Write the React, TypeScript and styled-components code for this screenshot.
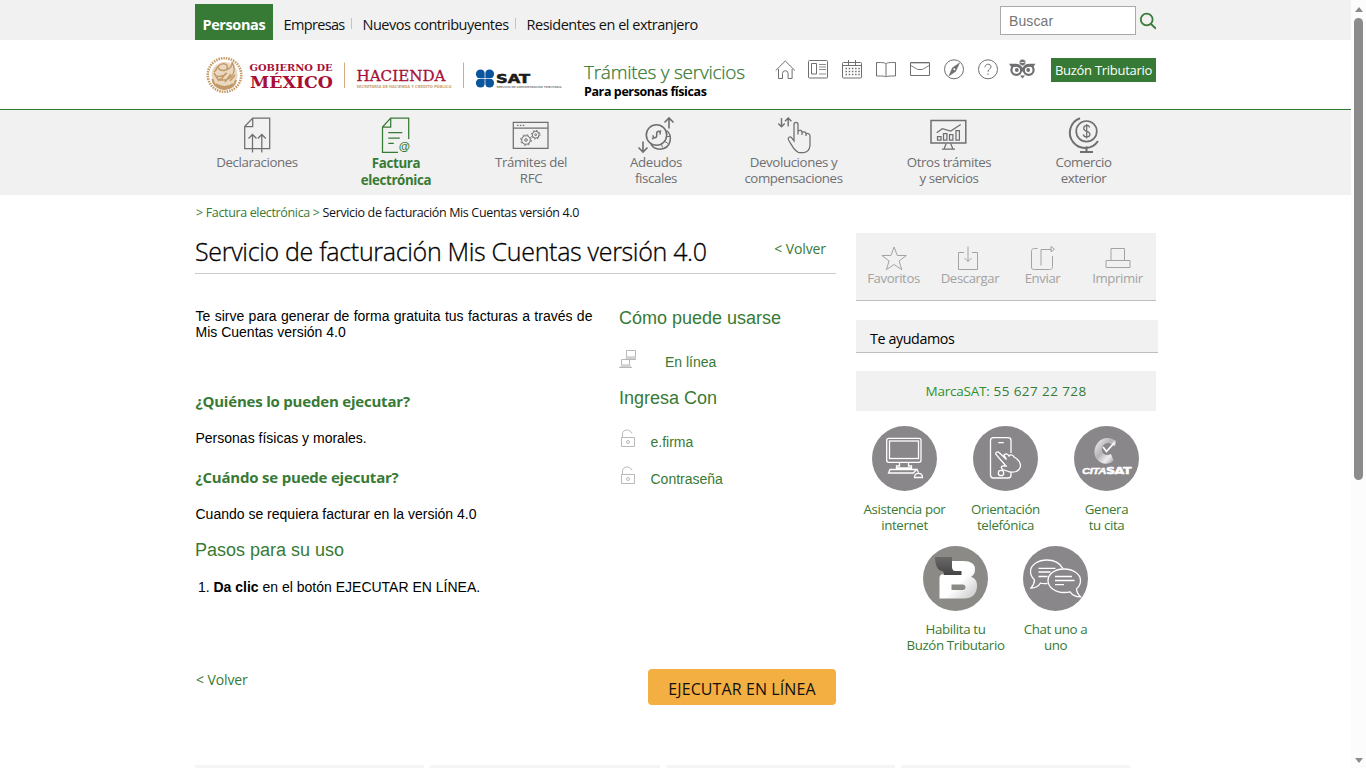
import React from 'react';
import styled, { createGlobalStyle } from 'styled-components';

const GREEN = '#377a35';
const GREY = '#6f6f72';
const PANEL = '#f1f1f1';
const HUMANIST = '"Open Sans", "Noto Sans", sans-serif';
const ARIAL = '"Liberation Sans", Arial, sans-serif';

const Global = createGlobalStyle`
  * { box-sizing: border-box; }
  body { margin: 0; background: #fff; color: #000; font-family: ${HUMANIST}; overflow: hidden; }
  svg { display: block; flex: none; }
  a { color: inherit; text-decoration: none; }
`;

/* ---------- page frame ---------- */
const Window = styled.div`
  display: flex;
  height: 768px;
  overflow: hidden;
`;
const Page = styled.div`
  flex: 1;
  min-width: 0;
  display: flex;
  flex-direction: column;
  > * { flex-shrink: 0; }
`;
const Inner = styled.div`
  width: 961px;
  margin-left: 195px;
  display: flex;
`;
const Body = styled(Inner)`
  width: 963px;
`;
const Scrollbar = styled.div`
  width: 15px;
  display: flex;
  flex-direction: column;
  align-items: center;
  justify-content: space-between;
  background: #fcfcfc;
  padding: 7px 0 5px;
`;
const Thumb = styled.div`
  width: 9px;
  height: 462px;
  border-radius: 5px;
  background: #8b8b8b;
  margin: 6px 0 auto;
`;
const Arrow = styled.div<{ $down?: boolean }>`
  border: 4.5px solid transparent;
  border-top: ${p => (p.$down ? '5px solid #8b8b8b' : '0')};
  border-bottom: ${p => (p.$down ? '0' : '5px solid #8b8b8b')};
`;

/* ---------- top bar ---------- */
const TopBar = styled.div`
  height: 40px;
  background: ${PANEL};
`;
const Tabs = styled.nav`
  display: flex;
  flex: 1;
  padding-top: 4px;
`;
const Tab = styled.a<{ $active?: boolean; $w: number; $ls: number }>`
  width: ${p => p.$w}px;
  height: 36px;
  padding-top: 3px;
  padding-left: ${p => (p.$active ? 7.5 : 10.5)}px;
  line-height: 36px;
  white-space: nowrap;
  font-size: 14.5px;
  letter-spacing: ${p => p.$ls}px;
  font-weight: ${p => (p.$active ? 700 : 400)};
  color: ${p => (p.$active ? '#fff' : '#111')};
  background: ${p => (p.$active ? GREEN : 'transparent')};
`;
const TabRule = styled.span`
  width: 1px;
  height: 11px;
  margin-top: 14px;
  background: #c4c4c4;
`;
const Search = styled.div`
  display: flex;
  padding: 6px 0 0;
  gap: 3px;
`;
const SearchBox = styled.div`
  width: 136px;
  height: 29px;
  border: 1px solid #a9a9a9;
  background: #fff;
  padding-left: 8px;
  font: 14px/28px ${ARIAL};
  letter-spacing: 0.1px;
  color: #757575;
`;

/* ---------- header ---------- */
const Header = styled.header`
  height: 70px;
  border-bottom: 1px solid ${GREEN};
`;
const Brand = styled.div`
  width: 389px;
  padding: 10px 0 0 5px;
`;
const Heading = styled.div`
  width: 184px;
  padding-top: 20px;
  white-space: nowrap;
`;
const Portal = styled.div`
  color: ${GREEN};
  font-size: 19px;
  line-height: 24px;
  letter-spacing: -0.25px;
  font-weight: 300;
  -webkit-text-stroke: 0.25px ${GREEN};
`;
const Audience = styled.div`
  font-size: 12.5px;
  line-height: 15px;
  font-weight: 700;
  letter-spacing: -0.4px;
`;
const HeaderTools = styled.div`
  display: flex;
  width: 283px;
  padding-top: 12px;
`;
const Mailbox = styled.a`
  width: 105px;
  height: 24px;
  margin-top: 18px;
  background: ${GREEN};
  color: #fff;
  text-align: center;
  font-size: 13px;
  line-height: 25px;
  letter-spacing: -0.28px;
  white-space: nowrap;
`;

/* ---------- section navigation ---------- */
const NavBar = styled.nav`
  height: 85px;
  background: ${PANEL};
`;
const NavItem = styled.a<{ $w: number; $active?: boolean }>`
  width: ${p => p.$w}px;
  flex: none;
  display: flex;
  flex-direction: column;
  align-items: center;
  padding-top: 4px;
  text-align: center;
  white-space: pre;
  font-size: 13.3px;
  line-height: ${p => (p.$active ? 17 : 16)}px;
  letter-spacing: ${p => (p.$active ? -0.35 : -0.4)}px;
  font-weight: ${p => (p.$active ? 700 : 400)};
  color: ${p => (p.$active ? GREEN : GREY)};
  svg { margin-bottom: ${p => (p.$active ? 1 : 0)}px; }
`;

/* ---------- content ---------- */
const Crumbs = styled.div`
  height: 38px;
  padding: 9px 0 0 1px;
  font-size: 12.5px;
  line-height: 17px;
  letter-spacing: -0.35px;
  color: ${GREEN};
  white-space: pre;
  b { font-weight: 400; color: #111; }
`;
const Main = styled.main`
  width: 641px;
  flex: none;
  margin-right: 20px;
`;
const TitleRow = styled.div`
  height: 41px;
  display: flex;
  justify-content: space-between;
  border-bottom: 1px solid #cbcbcb;
  white-space: nowrap;
`;
const Title = styled.h1`
  margin: 0;
  font-size: 25px;
  line-height: 37px;
  font-weight: 300;
  letter-spacing: -0.32px;
  -webkit-text-stroke: 0.3px #000;
`;
const Back = styled.a<{ $tall?: boolean }>`
  padding: 0 10px 0 1px;
  font-size: 14px;
  line-height: ${p => (p.$tall ? 32 : 22)}px;
  letter-spacing: -0.1px;
  color: ${GREEN};
`;
const Columns = styled.div`
  display: flex;
  height: 395px;
  padding-top: 34px;
`;
const Info = styled.section`
  width: 424px;
`;
const Usage = styled.section``;
const Copy = styled.p<{ $top?: number }>`
  margin: ${p => p.$top ?? 0}px 0 0 0.5px;
  min-height: 20px;
  font: 14px/16px ${ARIAL};
  padding: ${p => (p.$top ? '2px 0' : '0')};
  white-space: pre;
`;
const Lead = styled.span`
  word-spacing: 0.5px;
`;
const Steps = styled.ol`
  margin: 17px 0 0;
  padding-left: 18.5px;
  font: 14px/20px ${ARIAL};
`;
const Question = styled.h2<{ $top: number }>`
  margin: ${p => p.$top}px 0 0 0.5px;
  font-size: 15px;
  line-height: 20px;
  letter-spacing: -0.2px;
  color: ${GREEN};
`;
const Subhead = styled.h3<{ $top?: number }>`
  margin: ${p => p.$top ?? 0}px 0 0;
  font: 18px/20px ${ARIAL};
  color: ${GREEN};
`;
const Method = styled.div<{ $top: number; $gap: number }>`
  height: 20px;
  margin-top: ${p => p.$top}px;
  display: flex;
  gap: ${p => p.$gap}px;
  font: 14px/20px ${ARIAL};
  color: ${GREEN};
  svg { margin-top: -4px; }
`;
const Actions = styled.div`
  display: flex;
  justify-content: space-between;
`;
const Execute = styled.button`
  width: 188px;
  height: 36px;
  border: 0;
  border-radius: 4px;
  background: #f4af43;
  padding: 4px 0 0;
  font: 16px/32px ${HUMANIST};
  letter-spacing: 0.1px;
  color: #111;
`;

/* ---------- sidebar ---------- */
const Side = styled.aside`
  width: 302px;
  flex: none;
`;
const Toolbox = styled.div`
  width: 300px;
  height: 68px;
  display: flex;
  background: ${PANEL};
  border-bottom: 1px solid #bdbdbd;
`;
const Tool = styled.a<{ $w: number }>`
  width: ${p => p.$w}px;
  flex: none;
  display: flex;
  flex-direction: column;
  align-items: center;
  padding-top: 10px;
  font-size: 13.2px;
  line-height: 15px;
  letter-spacing: -0.4px;
  color: #a3a3a3;
`;
const HelpHead = styled.div`
  height: 33px;
  margin-top: 19px;
  padding: 3px 0 0 14px;
  background: ${PANEL};
  border-bottom: 1px solid #bdbdbd;
  font-size: 14.3px;
  line-height: 32px;
  letter-spacing: -0.4px;
`;
const Phone = styled.div`
  width: 300px;
  height: 40px;
  margin: 18px 0 15px;
  background: ${PANEL};
  text-align: center;
  font-size: 13.5px;
  line-height: 40px;
  letter-spacing: 0.4px;
  color: ${GREEN};
  span { color: #2f9130; letter-spacing: -0.2px; }
`;
const HelpRow = styled.div<{ $left: number }>`
  display: flex;
  height: 120px;
  margin: 0 -10px 0 ${p => p.$left}px;
`;
const HelpItem = styled.a<{ $w?: number }>`
  width: ${p => p.$w ?? 101}px;
  flex: none;
  display: flex;
  flex-direction: column;
  align-items: center;
  text-align: center;
  white-space: pre;
  font-size: 13.3px;
  line-height: 16px;
  letter-spacing: -0.36px;
  color: ${GREEN};
  svg { margin-bottom: 10px; }
`;
const Cards = styled.div`
  display: flex;
  gap: 6px;
  margin: 60px 0 0 195px;
`;
const Card = styled.div`
  width: 229.3px;
  height: 20px;
  background: #f5f5f5;
`;

type Box = { x: number; y: number; w: number; h: number; color?: string; sw?: number; children: React.ReactNode };
const Icon = ({ x, y, w, h, color = GREY, sw = 1, children }: Box) => (
  <svg width={w} height={h} viewBox={`${x} ${y} ${w} ${h}`} fill="none" stroke={color} strokeWidth={sw}>
    {children}
  </svg>
);

const Logo = () => (
  <svg width="370" height="50" viewBox="200 50 370 50">
    <g fill="none" stroke="#c39a67">
      <circle cx="224.500" cy="75" r="16.800" strokeWidth="2.600" strokeDasharray="1.500 1" />
      <circle cx="224.500" cy="75" r="13" fill="#ead9c2" stroke="none" />
      <path d="M212.500 79c1 7 7 10.500 12.500 10 6-.5 10-4 11-9M216 84c5 4 12 4 17 0" strokeWidth="2" />
      <path d="M215 71c2-5 6-8 10-7 3 1 3 4 1 6 4-1 7-5 6-8 3 5 3 11-1 15-3 3-8 4-12 2M216 76c4 1 8 0 11-3M218 67c1 3 4 4 8 3M214 73l5 8M220 81l6-8M225 82l6-8M230 81l5-6M217 69l-3 3" strokeWidth="1.500" />
    </g>
    <g fill="#a70f35" fontFamily='"DejaVu Serif", serif' fontWeight="700">
      <text x="249.500" y="70.500" fontSize="9.800" textLength="83" lengthAdjust="spacingAndGlyphs">GOBIERNO DE</text>
      <text x="250" y="87.500" fontSize="16.500" textLength="83" lengthAdjust="spacingAndGlyphs">MÉXICO</text>
      <text x="356.500" y="81" fontSize="15" fontWeight="400" stroke="#a70f35" strokeWidth=".3" textLength="89" lengthAdjust="spacingAndGlyphs">HACIENDA</text>
    </g>
    <text x="356.500" y="88" fontSize="4" fontFamily='"DejaVu Sans", sans-serif' fontWeight="700" fill="#c9a273" textLength="95" lengthAdjust="spacingAndGlyphs">SECRETARÍA DE HACIENDA Y CRÉDITO PÚBLICO</text>
    <path d="M344.500 62.500V88M463.500 62.500V88" stroke="#d0ae80" />
    <g fill="#0b559f">
      <circle cx="480.500" cy="74" r="4.600" /><circle cx="489.500" cy="74" r="4.600" />
      <circle cx="480.500" cy="83" r="4.600" /><circle cx="489.500" cy="83" r="4.600" />
      <path d="M480 73h10v11h-10z" />
    </g>
    <path d="M485 69.500v18M476 78.500h18" stroke="#fff" strokeWidth=".7" />
    <text x="496" y="83" fontSize="11.500" fontFamily='"DejaVu Sans", sans-serif' fontWeight="700" fill="#1c1c1c" stroke="#1c1c1c" strokeWidth=".5" textLength="34" lengthAdjust="spacingAndGlyphs">SAT</text>
    <text x="496.500" y="87.500" fontSize="2.800" fontFamily='"DejaVu Sans", sans-serif' fill="#333" textLength="65" lengthAdjust="spacingAndGlyphs">SERVICIO DE ADMINISTRACIÓN TRIBUTARIA</text>
  </svg>
);

const headerIcons: React.ReactNode[] = [
  <path d="M775.700 70.500l9.600-9.500 9.600 9.500M778.500 69v9.500h4v-5a2.800 2.800 0 0 1 5.600 0v5h4V69" />,
  <><rect x="808.500" y="60.500" width="19" height="17.500" rx="1" /><path d="M811.500 63.500h5v10.500h-5z" /><path d="M819 64.500h7M819 67h7M819 69.500h7M819 74h7" strokeWidth=".8" /></>,
  <><rect x="842.500" y="62.500" width="19" height="15.500" rx="1" /><path d="M848.500 60v5M855.500 60v5M842.500 65.500h19" /><path d="M845.500 68.500h15M845.500 71.500h15M845.500 74.500h15" strokeDasharray="1.500 1.700" strokeWidth="1.400" /></>,
  <path d="M886 64v12.500M886 64c-1-1.500-3-1.500-9.500-1.500v13.500c6 0 8.500 0 9.500 1 1-1 3.500-1 9.500-1V62.500c-6.500 0-8.500 0-9.500 1.500z" />,
  <><path d="M910.500 62.500h19v13h-19z" /><path d="M911 63.500h18" opacity=".35" /><path d="M911 65.500l6.500 4h5l6.500-4" strokeWidth=".9" /></>,
  <><circle cx="954" cy="69.300" r="9.500" /><path d="M959.500 63l-4 8.500-6.500 4.300 3.500-8z" fill={GREY} strokeWidth=".6" /><circle cx="954.300" cy="69.300" r="1" fill="#fff" stroke="none" /></>,
  <><circle cx="988" cy="69.300" r="9.500" /><path d="M985 67.300c0-4 6-4 6-.5 0 2.500-3 2-3 5M988 73.500v1.500" /></>,
  <g><circle cx="1016.300" cy="70" r="4.900" strokeWidth="2.200" /><circle cx="1028.700" cy="70" r="4.900" strokeWidth="2.200" /><circle cx="1016.800" cy="70" r="1.900" fill={GREY} stroke="none" /><circle cx="1028.200" cy="70" r="1.900" fill={GREY} stroke="none" /><path d="M1009 63.700h7c3 .3 5 2 6.500 4 1.500-2 3.500-3.700 6.500-4h6.500l-2 3h-5c-3 .5-4.500 3-6 5-1.500-2-3-4.500-6-5h-5.500zM1020 75.500h5l-2.500 3z" fill={GREY} stroke="none" /><circle cx="1022.500" cy="62.500" r="3.200" fill={GREY} stroke="#fff" strokeWidth=".5" /><path d="M1020.500 62.500h4" stroke="#fff" strokeWidth=".8" /></g>,
];

const navItems: { w: number; x: number; label: string; active?: boolean; art: React.ReactNode }[] = [
  { w: 124, x: 257, label: 'Declaraciones', art: <path d="M244.700 126.500l8-8.500h17v30.500h-25zM252.700 118v8.500h-8M252.500 152.500V135M248.500 138.500l4-4 4 4M261.800 152.500V135M257.800 138.500l4-4 4 4" /> },
  { w: 154, x: 396, label: 'Factura\nelectrónica', active: true, art: <><path d="M398 152.300h-15.500V127l8.200-9h18v21M390.700 118v9h-8.200M388.300 132.500h14M388.300 138h11.500M388.300 143.300h5.500" /><text x="398.800" y="149.500" fontSize="11.500" fontFamily="Liberation Sans" fill={GREEN} stroke="none">@</text></> },
  { w: 116, x: 531, label: 'Trámites del\nRFC', art: <><path d="M513.300 122.300h34.700v26h-34.700zM513.300 128.200H548" /><path d="M517 125.300h7.500" strokeDasharray="1.500 1.400" /><g strokeWidth="1"><circle cx="526" cy="140" r="4.300" /><circle cx="526" cy="140" r="1.300" /><circle cx="526" cy="140" r="5.300" strokeDasharray="2 2.160" /><circle cx="535.700" cy="134.700" r="3.400" /><circle cx="535.700" cy="134.700" r=".9" /><circle cx="535.700" cy="134.700" r="4.300" strokeDasharray="1.600 1.780" /></g></> },
  { w: 134, x: 656, label: 'Adeudos\nfiscales', art: <><circle cx="656.500" cy="135" r="10.200" strokeWidth="1.600" /><path d="M666.500 130.500c6.500 5 5 18-6.500 18.700-4 0-7.500-2-9-5" strokeWidth="1.500" /><path d="M665 141.500l3 2M661.500 144.500l1 3M667 136.500h3" strokeWidth="1" /><path d="M660 134.500c.8-2-.5-3.700-2.300-3.100-2.300 1-.2 3.600-1.200 5.300-1.200 2-4 1-3.300-1.500M661 130.500l-1.500 1.500M653.800 137.500l-1.600 1.600" strokeWidth="1.600" /><path d="M669 128.500V118M664.500 122.500l4.500-4.500 4.500 4.500M643 141.500V152M638.500 147.500l4.500 4.500 4.500-4.500" strokeWidth="1.600" /></> },
  { w: 141, x: 793.5, label: 'Devoluciones y\ncompensaciones', art: <><path d="M781 118v8.500M777.800 123.500l3.200 3.200 3.200-3.200M787.700 126.500V118M784.500 121.200l3.200-3.200 3.200 3.200" strokeWidth="1.400" /><path d="M793.500 141v-16.500c0-3 4-3 4 0v10-3.500c2-1.500 4-.5 4 1.500v2.500-2.500c2-1.500 4-.5 4 1.500v2-2c2-1.300 4 0 4 2v9.500c-.5 4-2.500 7-6.500 7h-5c-4.500-1.500-7-8-10-12.500-1-2.500 1.500-4 3-2.300z" /></> },
  { w: 170, x: 949, label: 'Otros trámites\ny servicios', art: <><path d="M931 120.600h34.800v22.500H931z" strokeWidth="1.500" /><path d="M946.200 143.500l-2 5M950.700 143.500l2 5M942 149h13M937.500 136.700h3.500v3.500h-3.500zM943.500 133.500h3.400v6.700h-3.400zM949.500 134.500h3.400v5.700h-3.400zM956 130.500h3.400v9.700H956zM936.700 132.700l5.600-4 8.400 2.300 10-6.500" /></> },
  { w: 99, x: 1083.5, label: 'Comercio\nexterior', art: <><circle cx="1086" cy="131.300" r="10.300" strokeWidth="1.700" /><path d="M1079.500 118.300a15.300 15.300 0 1 0 18 22.700M1086 146.500v5.500M1079.500 152h13" strokeWidth="2" /><path d="M1089.200 127.500c-1-3-6-2.500-6 .7 0 4 6.200 2.300 6.200 6 0 3.500-5.700 3.700-6.700.3M1086.200 124v14.500" /></> },
];

const tools = [
  { w: 75, x: 893.5, label: 'Favoritos', art: <path d="M893.600 247l3.200 8.500h9l-7.200 5.500 2.700 8.700-7.700-5.200-7.700 5.200 2.700-8.700-7.200-5.500h9z" /> },
  { w: 78, x: 970, label: 'Descargar', art: <path d="M964 252.500h-5.500v17h19v-17H972M968 246.500v15M964.500 258l3.500 3.500 3.500-3.500" /> },
  { w: 67, x: 1042.5, label: 'Enviar', art: <path d="M1037 248.500h-3c-2 0-3 1-3 3V267c0 2 1 2.500 3 2.500h15c2 0 3-1 3-3V256M1040.500 265.500v-16h10.500M1050.500 246.500l3.500 2.700-3.500 2.700z" /> },
  { w: 83, x: 1117.5, label: 'Imprimir', art: <path d="M1110.500 260v-11.500h13.500V260M1105.500 260.500h24v7h-24z" /> },
];

const Disc = ({ x, y, fill = '#8a878b', children }: { x: number; y: number; fill?: string; children: React.ReactNode }) => (
  <Icon x={x} y={y} w={65} h={65} color="#fff" sw={1.3}>
    <circle cx={x + 32.5} cy={y + 32.5} r="32.500" fill={fill} stroke="none" />
    {children}
  </Icon>
);

const Lock = () => (
  <Icon x={619} y={429} w={17} h={21} color="#b9b9b9">
    <path d="M621.500 438.500h13v9h-13zM622.500 438.500v-3.500c0-5 7.500-5.500 9.500-.5" /><circle cx="628" cy="443" r="1.500" />
  </Icon>
);

export default function App() {
  return (
    <Window>
      <Global />
      <Page>
        <TopBar>
          <Inner>
            <Tabs>
              <Tab href="#" $active $w={78} $ls={-0.4}>Personas</Tab>
              <Tab href="#" $w={78} $ls={-0.65}>Empresas</Tab>
              <TabRule />
              <Tab href="#" $w={163} $ls={-0.48}>Nuevos contribuyentes</Tab>
              <TabRule />
              <Tab href="#" $w={200} $ls={-0.48}>Residentes en el extranjero</Tab>
            </Tabs>
            <Search>
              <SearchBox>Buscar</SearchBox>
              <Icon x={1139} y={6} w={17} h={29} color={GREEN} sw={1.8}>
                <circle cx="1146.700" cy="19.500" r="5.900" /><path d="M1151 24l5 4.800" />
              </Icon>
            </Search>
          </Inner>
        </TopBar>
        <Header>
          <Inner>
            <Brand><Logo /></Brand>
            <Heading>
              <Portal>Trámites y servicios</Portal>
              <Audience>Para personas físicas</Audience>
            </Heading>
            <HeaderTools>
              {headerIcons.map((art, i) => (
                <Icon key={i} x={768 + 34 * i} y={52} w={34} h={34}>{art}</Icon>
              ))}
            </HeaderTools>
            <Mailbox href="#">Buzón Tributario</Mailbox>
          </Inner>
        </Header>
        <NavBar>
          <Inner>
            {navItems.map(n => (
              <NavItem href="#" key={n.label} $w={n.w} $active={n.active}>
                <Icon x={n.x - 22} y={114} w={44} h={40} color={n.active ? GREEN : GREY} sw={1.25}>{n.art}</Icon>
                {n.label}
              </NavItem>
            ))}
          </Inner>
        </NavBar>
        <Inner>
          <Crumbs>{'> Factura electrónica > '}<b>Servicio de facturación Mis Cuentas versión 4.0</b></Crumbs>
        </Inner>
        <Body>
          <Main>
            <TitleRow>
              <Title>Servicio de facturación Mis Cuentas versión 4.0</Title>
              <Back href="#" $tall>&lt; Volver</Back>
            </TitleRow>
            <Columns>
              <Info>
                <Copy><Lead>Te sirve para generar de forma gratuita tus facturas a través de</Lead>{'\nMis Cuentas versión 4.0'}</Copy>
                <Question $top={51}>¿Quiénes lo pueden ejecutar?</Question>
                <Copy $top={17}>Personas físicas y morales.</Copy>
                <Question $top={19}>¿Cuándo se puede ejecutar?</Question>
                <Copy $top={17}>Cuando se requiera facturar en la versión 4.0</Copy>
                <Subhead $top={16}>Pasos para su uso</Subhead>
                <Steps><li><b>Da clic</b> en el botón EJECUTAR EN LÍNEA.</li></Steps>
              </Info>
              <Usage>
                <Subhead>Cómo puede usarse</Subhead>
                <Method $top={24} $gap={29}>
                  <Icon x={619} y={348} w={17} h={21} color="#b9b9b9">
                    <path d="M626.500 350.500h9v6.500h-9zM624.500 359.500h12M625.500 358.200h10.500M621.500 359.500h8v5.500h-8zM619 367.500h13M620.500 366.200h10.500M629.500 360v5" />
                  </Icon>
                  En línea
                </Method>
                <Subhead $top={16}>Ingresa Con</Subhead>
                <Method $top={24} $gap={14.5}><Lock />e.firma</Method>
                <Method $top={17} $gap={14.5}><Lock />Contraseña</Method>
              </Usage>
            </Columns>
            <Actions>
              <Back href="#">&lt; Volver</Back>
              <Execute>EJECUTAR EN LÍNEA</Execute>
            </Actions>
          </Main>
          <Side>
            <Toolbox>
              {tools.map(t => (
                <Tool href="#" key={t.label} $w={t.w}>
                  <Icon x={t.x - 14} y={243} w={28} h={28} color="#a3a3a3">{t.art}</Icon>
                  {t.label}
                </Tool>
              ))}
            </Toolbox>
            <HelpHead>Te ayudamos</HelpHead>
            <Phone><span>MarcaSAT:</span> 55 627 22 728</Phone>
            <HelpRow $left={-2}>
              <HelpItem href="#">
                <Disc x={872} y={426}>
                  <rect x="886.700" y="438.300" width="34.300" height="24" rx="2" /><rect x="889.500" y="441" width="29" height="17.500" />
                  <path d="M899.500 462.500v3.500h-3v2h15v-2h-3v-3.500M890 469.500l-1.500 3.500h25l3-3.500zM914.500 477.500c0-5.500 8-5.500 8 0zM917 469.500l1.500 3" />
                </Disc>
                {'Asistencia por\ninternet'}
              </HelpItem>
              <HelpItem href="#">
                <Disc x={973} y={426}>
                  <path d="M1011 453v-12.500c0-2-1-2.800-3-2.800h-14.500c-2 0-3 1-3 3V475c0 2 1 3 3 3h14.500c2 0 3-1 3-3v-3M998.300 442.700h5.500" />
                  <circle cx="1001" cy="473" r="2.700" />
                  <path d="M1006 466l-10-11.500c-1-2 1.500-3.500 3-2l7.500 7-2.500-4.500c2-2 4-1 5 1 2-2.500 4.500-.5 5 1 4 2 6 5 6.500 8 0 3-2 5.500-4.500 6.500-3 1-6 1-9-.5l-4.500-1.500c-2-2-1-4 1.500-3.500z" fill="#8a878b" />
                </Disc>
                {'Orientación\ntelefónica'}
              </HelpItem>
              <HelpItem href="#">
                <Disc x={1074} y={426}>
                  <defs><linearGradient id="cita" x1="0" y1="0" x2="1" y2="1"><stop offset="0" stopColor="#f6f6f6" /><stop offset=".45" stopColor="#b5b3b7" /><stop offset=".7" stopColor="#eee" /><stop offset="1" stopColor="#918e93" /></linearGradient></defs>
                  <path d="M1116 441c-6-4.500-14-4-18 1.500-5 6-4.500 14 0 18 4 4 11 4.500 15.500 0l-2.500-6.500c-4 2-8 1-9-3-1-4 2-8 6-8 4 0 4 3 7 3z" fill="url(#cita)" stroke="none" />
                  <path d="M1103 447l3.500 4.500 8-9" strokeWidth="1.700" />
                  <text x="1082" y="474" fontSize="9.500" fontFamily="Liberation Sans" fontWeight="700" fontStyle="italic" fill="#fff" strokeWidth=".4" textLength="24" lengthAdjust="spacingAndGlyphs">CITA</text>
                  <text x="1106" y="474" fontSize="9.500" fontFamily="DejaVu Sans" fontWeight="700" fill="#fff" strokeWidth=".5" textLength="25" lengthAdjust="spacingAndGlyphs">SAT</text>
                </Disc>
                {'Genera\ntu cita'}
              </HelpItem>
            </HelpRow>
            <HelpRow $left={49}>
              <HelpItem href="#">
                <Disc x={923} y={546} fill="#8b8a87">
                  <defs>
                    <linearGradient id="letter" x1="0" y1="0" x2="1" y2="1"><stop offset=".55" stopColor="#fff" /><stop offset="1" stopColor="#c4c4c4" /></linearGradient>
                    <linearGradient id="flap" x1="0" y1="0" x2="0" y2="1"><stop offset="0" stopColor="#6a6a6a" /><stop offset="1" stopColor="#444" /></linearGradient>
                  </defs>
                  <path d="M951 561h12c8 0 12 3 12 8 0 4-1 6-4 8 4 1 6 4 6 8.500 0 9-5 13-13 13h-24.500V578c0-3 2-4 4-4h18c-8 0-10.500-4-10.500-13zM951.500 584.500v5.500h11c4 0 4-5.500 0-5.500z" fill="url(#letter)" stroke="none" fillRule="evenodd" />
                  <path d="M935 557h17v9c0 4 1 5 4 5h5.500v4h-18c1-3 0-3-1.500-4-5-1-7-7-7-14z" fill="url(#flap)" stroke="none" />
                </Disc>
                {'Habilita tu\nBuzón Tributario'}
              </HelpItem>
              <HelpItem href="#" $w={99}>
                <Disc x={1023} y={546}>
                  <path d="M1063 568.500c-3-5-9-8.500-16-8.500-9 0-16.500 5-16.500 11.500 0 4 2 6.500 4 8.500 0 3-1 5-3.500 8 4 0 7.500-1.500 9.500-5 2 1 5 .5 7 .5M1038.500 568.300h17M1038.500 572h12M1038.500 576.500h9" />
                  <path d="M1064 569c-9 0-16 5-16 11.500s7 12 16 12c2 0 4 0 6-.7 2.500 3.500 5.500 5 10.500 5-2.500-2.500-4-4.500-4-8 2.500-2 4-5 4-8.300 0-6.500-7.500-11.500-16.500-11.500zM1055 576.500h17M1055 580.500h19.500M1055 584.700h9" />
                </Disc>
                {'Chat uno a\nuno'}
              </HelpItem>
            </HelpRow>
          </Side>
        </Body>
        <Cards><Card /><Card /><Card /><Card /></Cards>
      </Page>
      <Scrollbar><Arrow /><Thumb /><Arrow $down /></Scrollbar>
    </Window>
  );
}
